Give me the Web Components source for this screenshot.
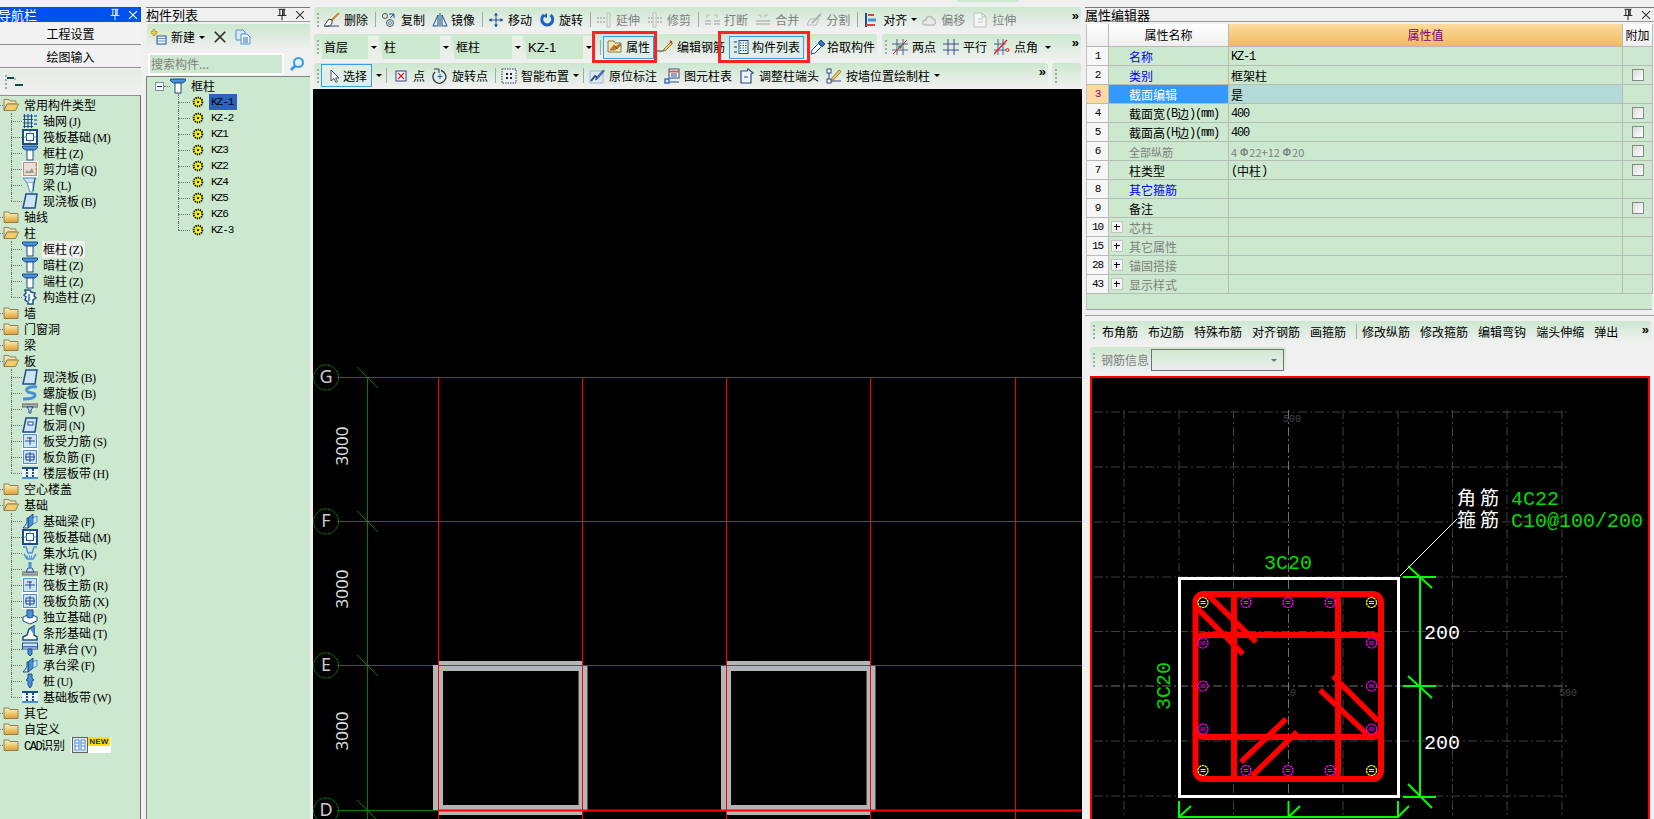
<!DOCTYPE html>
<html lang="zh">
<head>
<meta charset="utf-8">
<title>构件编辑</title>
<style>
  html, body { margin: 0; height: 100%; overflow: hidden; background: #f0f0f0; }
  body { font: 12px/16px "Noto Sans CJK SC", "Liberation Sans", sans-serif; color: #000; }
  #nav { width: 141px; }
  #list { width: 164px; margin-left: 5px; --pr: 3px; }
  #center { width: 769px; margin-left: 3px; }
  #props { width: 569px; margin-left: 3px; }
  .row { display: flex; flex: none; margin-left: 1px; }
  .off { color: #808080; }
</style>
</head>
<body>
<script>
// icon set, all drawn on a 16x16 box
const B = '#1a4f8c', L = '#4a90d8', P = '#cfe2f8';
const ICONS = {
  folderOpen: `<path d="M1 4V2.500h5l1 1.500h6v3H4l-3 6z" fill="#f8e8b0" stroke="#8a8060"/><path d="M4 7h11.500l-3 6.500H1z" fill="#f4cc68" stroke="#8a8060"/>`,
  folder: `<defs><linearGradient id="f" x2="0" y2="1"><stop offset="0" stop-color="#fff4c0"/><stop offset="1" stop-color="#e0a028"/></linearGradient></defs><path d="M1 13.500V3h5l1 1.500h8v9z" fill="url(#f)" stroke="#8a8060"/>`,
  grid: `<path d="M1 3h10M1 6.500h10M1 10h10M1 13.500h10M2.500 1v14M6 1v14M9.500 1v14" stroke="${B}" fill="none"/><path d="M12 3h3M12 7h3M12 11h3" stroke="${L}" stroke-width="2"/>`,
  raft: `<rect x="1" y="1" width="14" height="14" fill="#fff" stroke="${B}" stroke-width="2"/><rect x="4.500" y="4.500" width="7" height="7" fill="none" stroke="${B}"/><path d="M2 8h3M11 8h3M8 2v3M8 11v3" stroke="${L}"/>`,
  col: `<path d="M.5 1h15v2l-3 2h-9l-3-2z" fill="${L}" stroke="${B}"/><rect x="5" y="5" width="6" height="10" fill="#fff" stroke="${B}"/>`,
  shear: `<rect width="16" height="16" fill="#fff"/><rect x="1.500" y="1.500" width="13" height="13" fill="#e8e0d8" stroke="#b09080"/><path d="M3 12l2-3 2 2 3-4 2 5z" fill="#a09890"/><path d="M13 4h2M13 8h2M13 12h2" stroke="#e07020"/>`,
  beam: `<path d="M1 1h13l-3 5H5z" fill="${P}" stroke="${L}"/><path d="M5 6l3 9h3V6" fill="#fff" stroke="${L}"/><path d="M13 1l-2 13" stroke="${B}"/>`,
  slab: `<path d="M4 1h11l-2 14H1z" fill="${P}" stroke="${B}" stroke-width="1.500"/>`,
  spiral: `<path d="M15 2C9 1 3 3 5 6s8 1 8 4-6 4-12 4" fill="none" stroke="${L}" stroke-width="3"/>`,
  cap: `<rect x="0" y="3" width="16" height="3" fill="#b0b0b0" stroke="#606060"/><path d="M5 6h6l-2 3v3H7V9z" fill="${P}" stroke="${B}"/>`,
  hole: `<path d="M4 1h11l-2 14H1z" fill="${P}" stroke="${B}" stroke-width="1.500"/><rect x="6" y="5" width="5" height="3" fill="#fff" stroke="${B}"/>`,
  barS: `<rect width="16" height="16" fill="#fff"/><rect x="1.500" y="1.500" width="13" height="13" fill="${P}" stroke="${L}"/><path d="M3 8h10M8 4v8M5 5h5" stroke="${B}" fill="none"/>`,
  barF: `<rect width="16" height="16" fill="#fff"/><rect x="1.500" y="1.500" width="13" height="13" fill="${P}" stroke="${L}"/><path d="M3 8h10M8 3v10M4 5h8v6H4z" stroke="${B}" fill="none"/>`,
  strip: `<rect y="2" width="16" height="2" fill="${B}"/><rect y="4" width="16" height="9" fill="#eef4fc"/><rect y="12" width="16" height="2" fill="${L}"/><path d="M5 4v9M11 4v9" stroke="${B}" stroke-width="2" stroke-dasharray="2 1"/>`,
  fbeam: `<path d="M6 5l5-4v10l-5 4z" fill="${L}" stroke="${B}"/><path d="M1 15l4-5V5h1v10z" fill="${P}" stroke="${B}"/><path d="M11 11l4-2V3l-4 2z" fill="${P}" stroke="${L}"/>`,
  pit: `<path d="M1 2h3l2 6h4l2-6h3M2 9l3 5h6l3-5" fill="none" stroke="${L}" stroke-width="1.500"/><path d="M5 12h6" stroke="${L}" stroke-dasharray="1 1" stroke-width="3"/>`,
  pier: `<rect y="11" width="16" height="3" fill="#b0b0b0" stroke="#707070"/><path d="M4 11l2-4h4l2 4z" fill="${P}" stroke="${B}"/><rect x="6.500" y="1" width="3" height="6" fill="${L}"/>`,
  iso: `<path d="M1 8l7-3 7 3v4l-7 3-7-3z" fill="#fff" stroke="${B}"/><path d="M5 1h6v7l-3 1-3-1z" fill="${L}" stroke="${B}"/>`,
  sfoot: `<path d="M1 15v-3l4-2 2-6 5-3v9l3 2v3z" fill="#fff" stroke="${B}" stroke-width="1.500"/><path d="M8 4l4-3v9" fill="${L}"/>`,
  pcap: `<rect x="0.500" y="2" width="15" height="4" fill="${P}" stroke="${B}"/><rect x="0.500" y="6" width="15" height="2" fill="#fff" stroke="${B}"/><path d="M6 8h4v5l-2 2-2-2z" fill="${L}" stroke="${B}"/>`,
  pile: `<path d="M6 1h4v4l2 2-2 1v4l-2 3-2-3V8L4 7l2-2z" fill="${L}" stroke="${B}"/>`,
  constr: `<path d="M3 1h5l1 2 4 1-1 3 2 2-3 2v4H6v-2L3 11l1-3-2-2 2-2z" fill="#fff" stroke="${B}" stroke-width="1.500"/><path d="M7 5v7" stroke="${L}" stroke-width="2"/>`,
  cad: `<rect x=".5" y=".5" width="15" height="15" fill="#dbe9fa" stroke="#606060"/><rect x="3" y="3" width="4" height="10" fill="#fff" stroke="${L}"/><rect x="9" y="3" width="4" height="10" fill="#fff" stroke="${L}"/><path d="M3 6h4M3 9h4M9 6h4M9 9h4" stroke="${L}"/>`,
  gear: `<circle cx="8" cy="8" r="5" fill="#ffff00" stroke="#000" stroke-width="2.200" stroke-dasharray="1.500 1"/><circle cx="8" cy="8" r="1.500" fill="#403000"/>`,
  dash: `<path d="M0 4h7" stroke="#085050" stroke-width="2"/><path d="M8 11h8" stroke="#085050" stroke-width="2"/><path d="M7 5h2" stroke="#888"/>`,
  pin: `<path d="M4 1.500h8M5.500 2v6M10.500 2v6M3 8.500h10M8 9v5" stroke="#000" fill="none"/><path d="M9 2v6" stroke="#000" stroke-width="1.500"/>`,
  close: `<path d="M3.500 3.500l9 9M12.500 3.500l-9 9" stroke="#333" stroke-width="1.200"/>`,
  closeW: `<path d="M3.500 3.500l9 9M12.500 3.500l-9 9" stroke="#fff" stroke-width="1.200"/>`,
  pinW: `<path d="M4 1.500h8M5.500 2v6M10.500 2v6M3 8.500h10M8 9v5" stroke="#fff" fill="none"/><path d="M9 2v6" stroke="#fff" stroke-width="1.500"/>`,
  newc: `<path d="M2 .5h2v2h2v2H4v2H2v-2H0v-2h2z" fill="#f4d840" stroke="#a08000" stroke-width=".6"/><rect x="6" y="7" width="9" height="8" fill="#fff" stroke="${B}"/><path d="M6 9.500h9M6 12h9" stroke="${L}"/>`,
  cross: `<path d="M2 2l12 12M14 2L2 14" stroke="#303030" stroke-width="2"/>`,
  docs: `<path d="M1 1h7l2 2v8H1z" fill="#dbe9fa" stroke="${L}"/><path d="M6 5h6l3 3v7H6z" fill="#eef4fc" stroke="${L}"/><path d="M8 9h5M8 11h5M8 13h5" stroke="${B}" stroke-width=".8"/>`,
  search: `<circle cx="9.500" cy="6.500" r="4.500" fill="#dff0ff" stroke="#3a9ae0" stroke-width="2"/><path d="M6 10l-4 4" stroke="#3a9ae0" stroke-width="3"/>`,
  erase: `<path d="M15 1L7 9" stroke="#d08020" stroke-width="2"/><path d="M8 8l-3-1-3 4-2 3c4 1 7 0 8-3z" fill="#fff" stroke="#404040"/><path d="M1 14h14" stroke="#404060"/>`,
  dup: `<circle cx="4" cy="4" r="2.500" fill="none" stroke="#505050"/><circle cx="9" cy="11" r="3.500" fill="none" stroke="#505050"/><circle cx="9" cy="11" r="1.500" fill="none" stroke="${L}"/><path d="M8 2l5 0 0 4M13 2L9 6" stroke="${B}" fill="none"/>`,
  mirror: `<path d="M6 3v11H1zM10 3v11h5z" fill="none" stroke="${B}"/><path d="M8 1v14" stroke="${B}"/>`,
  move: `<path d="M8 1v14M1 8h14" stroke="${B}"/><path d="M8 1L6 3.500h4zM8 15l-2-2.500h4zM1 8l2.500-2v4zM15 8l-2.500-2v4z" fill="${B}"/>`,
  rotate: `<path d="M5 3a5.500 5.500 0 1 0 6.500 0" fill="none" stroke="#2060c0" stroke-width="3"/><path d="M8 1v5l-4-2z" fill="#2060c0"/>`,
  extend: `<path d="M1 6h8M1 10h8" stroke="#a8a8a8" stroke-dasharray="2 1" stroke-width="1.500"/><path d="M11 1h3v14h-3z" fill="none" stroke="#b8b8b8"/>`,
  trim: `<path d="M1 6h14M1 10h14" stroke="#a8a8a8" stroke-dasharray="2 1" stroke-width="1.500"/><path d="M6 1h3v14H6z" fill="#f0f0f0" stroke="#b8b8b8"/>`,
  brk: `<path d="M1 9h6M10 9h6M1 12h6M10 12h6" stroke="#b0b0b0" stroke-width="1.500"/><path d="M3 6V3h3M13 6V3h-3" stroke="#b0b0b0" fill="none"/>`,
  merge: `<path d="M1 9h14M1 12h14" stroke="#b0b0b0" stroke-width="1.500"/><path d="M3 3h3v3M13 3h-3v3" stroke="#b0b0b0" fill="none"/>`,
  split: `<path d="M1 13l3-6h9l-3 6z" fill="none" stroke="#b0b0b0"/><path d="M6 11L15 2" stroke="#a8a8a8" stroke-width="2"/>`,
  alignl: `<path d="M3 1v14" stroke="${B}" stroke-width="2"/><path d="M5 3h6" stroke="#e04040" stroke-width="2"/><path d="M5 8h8" stroke="${L}" stroke-width="3"/><path d="M3 13h9" stroke="#e04040" stroke-width="2"/>`,
  offs: `<path d="M3 13c-3-2 0-6 2-5 0-4 6-5 7-1 3 0 3 5 1 6z" fill="#e8e8e8" stroke="#b8b8b8" stroke-width="1.500"/>`,
  stretch: `<path d="M2 1h8l4 4v10H2z" fill="#f8f8f8" stroke="#b8b8b8"/><path d="M6 7h5M6 10h5M10 1v4h4" stroke="#b8b8b8" fill="none"/>`,
  propsi: `<path d="M1 4V2h6l1 2h6v9H1z" fill="#f8e8b0" stroke="#8a7a50"/><path d="M3 11l4-5 3 3-2 2zM8 8l5-3 1 1-4 4z" fill="#d88030" stroke="#704010" stroke-width=".6"/>`,
  editbar: `<path d="M0 12h6l3-2" stroke="#303030" fill="none"/><path d="M7 10l7-7 1.500 1.500-7 7-2 .5z" fill="#f4d060" stroke="#806020" stroke-width=".8"/><path d="M13 2l2 2" stroke="#d03030" stroke-width="2"/>`,
  listi: `<path d="M1 2h3v2H1zM1 7h3v2H1zM1 12h3v2H1z" fill="#7090b0"/><rect x="6" y="1.500" width="9" height="13" fill="#fff" stroke="${B}"/><path d="M7 4h7M7 6.500h7M7 9h7M7 11.500h7" stroke="${B}" stroke-dasharray="1.500 1"/>`,
  pick: `<path d="M1 15l1-4 7-7 3 3-7 7z" fill="#fff" stroke="${B}"/><path d="M9 3l2-2 4 4-2 2-1 1-4-4z" fill="#3070c0" stroke="${B}"/>`,
  twop: `<path d="M0 5h16M0 11h16M5 0v16M11 0v16" stroke="#304080" stroke-width=".8"/><path d="M1 15L15 1" stroke="#e02020"/><circle cx="8" cy="8" r="1.800" fill="#408030"/>`,
  para: `<path d="M0 5h16M0 11h16M5 0v16M11 0v16" stroke="#304080" stroke-width=".9"/>`,
  pang: `<path d="M0 5h12M0 11h12M4 0v16M9 0v16" stroke="#304080" stroke-width=".8"/><path d="M0 15L13 1" stroke="#e02020" stroke-width="1.300"/><circle cx="13.500" cy="11" r="1.500" fill="none" stroke="#d02020"/>`,
  cursor: `<path d="M5 2v11l3-2.500 2 4 1.500-1-2-3.500h3.500z" fill="#fff" stroke="#505060"/>`,
  point: `<rect x="3" y="3" width="10" height="10" fill="#f4f8ff" stroke="#304080"/><path d="M5 5l6 6M11 5l-6 6" stroke="#d02020" stroke-width="1.300"/>`,
  rotp: `<path d="M3 4a6.500 6.500 0 1 0 6-1.500" fill="none" stroke="#303848" stroke-width="1.300"/><path d="M2 1h5v4" fill="none" stroke="#303848"/><path d="M8 6v5M5.500 8.500h5" stroke="#2060c0"/>`,
  smart: `<rect x="1" y="1" width="14" height="14" fill="#e8eef4" stroke="#404040" stroke-dasharray="1.500 1"/><path d="M5 5h2v2H5zM9 5h2v2H9zM5 9h2v2H5zM9 9h2v2H9z" fill="#202020"/>`,
  inplace: `<path d="M1 3h13v12H1z" fill="#dbe9fa" stroke="#a0b8d8"/><path d="M2 13l4-5 3 2" fill="none" stroke="#304880" stroke-width="2"/><path d="M7 10l7-8 1.500 1-7 8-2 1z" fill="#4a78c0" stroke="#204070" stroke-width=".6"/>`,
  table: `<rect x="5" y="1" width="10" height="9" fill="#fff" stroke="#304880"/><path d="M5 3.500h10" stroke="#d06040" stroke-width="2"/><path d="M7 6h6M7 8h6" stroke="#304880"/><rect x="1" y="11" width="4" height="4" fill="none" stroke="#2060c0" stroke-width="1.300"/><path d="M6 14h9" stroke="#304880"/>`,
  adjust: `<path d="M2 3h6l1-2 5 4-2 1v9H2z" fill="#eef4fc" stroke="#304880" stroke-width="1.200"/><path d="M5 9h4" stroke="#304880"/>`,
  wallpos: `<rect x="1" y="1" width="4" height="4" fill="#fff" stroke="#304880"/><rect x="1" y="11" width="4" height="4" fill="#fff" stroke="#304880"/><path d="M3 5v6M5 13h10" stroke="#304880"/><path d="M6 10l7-8 2 1.500-7 8-3 1z" fill="#f0c860" stroke="#806020" stroke-width=".7"/>`
};

const NAV_ROWS = [
  [0,'folderOpen','常用构件类型'],[1,'grid','轴网','(J)'],[1,'raft','筏板基础','(M)'],[1,'col','框柱','(Z)'],[1,'shear','剪力墙','(Q)'],[1,'beam','梁','(L)'],[1,'slab','现浇板','(B)'],
  [0,'folder','轴线'],
  [0,'folderOpen','柱'],[1,'col','框柱','(Z)','hover'],[1,'col','暗柱','(Z)'],[1,'col','端柱','(Z)'],[1,'constr','构造柱','(Z)'],
  [0,'folder','墙'],[0,'folder','门窗洞'],[0,'folder','梁'],
  [0,'folderOpen','板'],[1,'slab','现浇板','(B)'],[1,'spiral','螺旋板','(B)'],[1,'cap','柱帽','(V)'],[1,'hole','板洞','(N)'],[1,'barS','板受力筋','(S)'],[1,'barF','板负筋','(F)'],[1,'strip','楼层板带','(H)'],
  [0,'folder','空心楼盖'],
  [0,'folderOpen','基础'],[1,'fbeam','基础梁','(F)'],[1,'raft','筏板基础','(M)'],[1,'pit','集水坑','(K)'],[1,'pier','柱墩','(Y)'],[1,'barS','筏板主筋','(R)'],[1,'barF','筏板负筋','(X)'],[1,'iso','独立基础','(P)'],[1,'sfoot','条形基础','(T)'],[1,'pcap','桩承台','(V)'],[1,'fbeam','承台梁','(F)'],[1,'pile','桩','(U)'],[1,'strip','基础板带','(W)'],
  [0,'folder','其它'],[0,'folder','自定义'],[0,'folder','CAD识别',null,'new']
];

// wraps runs of latin text so they get the narrow look of the original
const latin = s => s.replace(/[\x21-\x7e]+/g, m => `<span class="l">${m}</span>`);

class UiIcon extends HTMLElement {
  connectedCallback() {
    const s = this.getAttribute('size') || 16;
    this.attachShadow({ mode: 'open' }).innerHTML = `
      <style>:host { display: block; flex: none; width: ${s}px; height: ${s}px; } svg { display: block; }</style>
      <svg width="${s}" height="${s}" viewBox="0 0 16 16">${ICONS[this.getAttribute('name')] || ''}</svg>`;
  }
}
customElements.define('ui-icon', UiIcon);

class GclWorkbench extends HTMLElement {
  connectedCallback() {
    this.attachShadow({ mode: 'open' }).innerHTML = `
      <style>
        :host { display: flex; flex-direction: column; height: 819px; overflow: hidden; }
        .top { flex: none; height: 7px; display: flex; }
        .top i { display: block; width: 62px; height: 2px; margin-left: 957px; background: #cce8cf; }
        .main { flex: 1; min-height: 0; display: flex; }
      </style>
      <div class="top"><i></i></div>
      <div class="main"><slot></slot></div>`;
  }
}
customElements.define('gcl-workbench', GclWorkbench);

class DockPanel extends HTMLElement {
  connectedCallback() {
    const on = this.hasAttribute('active');
    this.attachShadow({ mode: 'open' }).innerHTML = `
      <style>
        :host { display: flex; flex-direction: column; flex: none; min-width: 0; height: 812px; overflow: hidden; }
        .bar { flex: none; height: 15px; display: flex; align-items: center; box-sizing: border-box; font-size: 13px; line-height: 13px;
               background: #f0f0f0; border-top: 1px solid #777; border-bottom: 1px solid #999; }
        :host([active]) .bar { background: #0050ee; color: #fff; border: 0; }
        .name { flex: 1; white-space: nowrap; }
        :host([active]) .name { margin-left: -2px; }
        .tools { display: flex; gap: 4px; padding-right: var(--pr, 1px); }
        .body { height: 797px; display: flex; flex-direction: column; padding-top: 1px; box-sizing: border-box; }
      </style>
      <div class="bar"><span class="name">${this.getAttribute('heading')}</span>
        <span class="tools"><ui-icon name="${on ? 'pinW' : 'pin'}" size="14"></ui-icon><ui-icon name="${on ? 'closeW' : 'close'}" size="14"></ui-icon></span></div>
      <div class="body"><slot></slot></div>`;
  }
}
customElements.define('dock-panel', DockPanel);

class SideButton extends HTMLElement {
  connectedCallback() {
    this.attachShadow({ mode: 'open' }).innerHTML = `
      <style>
        :host { display: flex; flex: none; height: 22px; margin-bottom: 1px; align-items: center; justify-content: center;
                box-sizing: border-box; background: #f2f2f2; border-bottom: 1px solid #909090; font-size: 12px; }
      </style><slot></slot>`;
  }
}
customElements.define('side-button', SideButton);

const STRIP = 'linear-gradient(#cce8cf, #f0f0f0)';

class TreeView extends HTMLElement {
  connectedCallback() {
    const html = NAV_ROWS.map((r, i) => {
      const [depth, icon, text, hot, extra] = r;
      const last = depth === 1 && (!NAV_ROWS[i + 1] || NAV_ROWS[i + 1][0] === 0);
      return `<div class="r d${depth} ${last ? 'last' : ''}">
        <ui-icon name="${icon}"></ui-icon>
        <span class="t ${extra === 'hover' ? 'hov' : ''}">${latin(text)}${hot ? `<span class="h">${hot}</span>` : ''}</span>
        ${extra === 'new' ? '<span class="nw"><ui-icon name="cad"></ui-icon><b>NEW</b></span>' : ''}
      </div>`;
    }).join('');
    this.attachShadow({ mode: 'open' }).innerHTML = `
      <style>
        :host { display: block; flex: 1; min-height: 0; background: #cce8cf; border-top: 1px solid #909090; border-right: 1px solid #707070; padding-top: 1px; overflow: hidden; }
        .r { position: relative; display: flex; align-items: center; height: 16px; white-space: nowrap; }
        .d0 { padding-left: 3px; } .d0 .t { margin-left: 5px; }
        .d1 { padding-left: 22px; } .d1 .t { margin-left: 5px; padding: 0 1px 0 0; }
        .r::after { content: ""; position: absolute; top: 8px; border-top: 1px dotted #707070; }
        .d0::after { left: 0; width: 3px; }
        .d1::after { left: 11px; width: 11px; }
        .d1::before { content: ""; position: absolute; left: 11px; top: 0; bottom: 0; border-left: 1px dotted #707070; }
        .last::before { bottom: 8px; }
        .l { font: 12px "Liberation Mono", monospace; letter-spacing: -1.500px; }
        .h { font: 12px "Liberation Serif", serif; margin-left: 2px; letter-spacing: -.5px; }
        .hov { background: #f0f2ef; margin-left: 4px !important; padding: 0 2px 0 1px !important; }
        .nw { display: flex; background: #fff; margin-left: 6px; height: 16px; width: 40px; box-sizing: border-box; padding-left: 1px; }
        .nw b { height: 9px; font: bold 8px/9px "Liberation Sans", sans-serif; background: #ffe000; padding: 0 1px; color: #203060; letter-spacing: .3px; }
      </style>${html}`;
  }
}
customElements.define('tree-view', TreeView);

class MemberTree extends HTMLElement {
  connectedCallback() {
    const items = this.getAttribute('items').split(',');
    this.attachShadow({ mode: 'open' }).innerHTML = `
      <style>
        :host { display: block; flex: 1; min-height: 0; background: #cce8cf; border: 1px solid #808080; border-width: 1px 0 0 1px; padding-top: 1px; }
        .r { position: relative; display: flex; align-items: center; height: 16px; }
        .box { margin-left: 8px; width: 9px; height: 9px; box-sizing: border-box; border: 1px solid #8090a8; background: #f4f6fa; position: relative; }
        .box::after { content: ""; position: absolute; left: 1px; right: 1px; top: 3px; border-top: 1px solid #203080; }
        .hz { width: 6px; border-top: 1px dotted #707070; }
        .root ui-icon { margin-right: 5px; }
        .kid { padding-left: 44px; }
        .kid::before { content: ""; position: absolute; left: 31px; top: 0; bottom: 0; border-left: 1px dotted #707070; }
        .kid:last-child::before { bottom: 8px; }
        .kid::after { content: ""; position: absolute; left: 31px; width: 12px; top: 8px; border-top: 1px dotted #707070; }
        .kid span { margin-left: 4px; padding: 0 2px; height: 16px; font: 11px/17px "Liberation Mono", monospace; letter-spacing: -1px; }
        .sel { background: #2d62bc; padding-right: 4px !important; }
      </style>
      <div class="r root"><i class="box"></i><i class="hz"></i><ui-icon name="col"></ui-icon>框柱</div>
      ${items.map((k, i) => `<div class="r kid"><ui-icon name="gear" size="14"></ui-icon><span class="${i ? '' : 'sel'}">${k}</span></div>`).join('')}`;
  }
}
customElements.define('member-tree', MemberTree);

class ToolStrip extends HTMLElement {
  connectedCallback() {
    this.attachShadow({ mode: 'open' }).innerHTML = `
      <style>
        :host { display: flex; align-items: center; gap: var(--gap, 7px); flex: none; box-sizing: border-box; padding-left: 3px; white-space: nowrap;
                background: ${STRIP}; border-radius: 3px 3px 0 0; position: relative; }
        .grip { width: 2px; height: 14px; margin-right: -2px; flex: none; background: repeating-linear-gradient(#a0a8a0 0 2px, transparent 2px 4px); }
        .more { position: absolute; right: 2px; top: 2px; font: bold 13px/13px "Liberation Sans", sans-serif; }
      </style>
      <i class="grip"></i><slot></slot><span class="more">${this.hasAttribute('nomore') ? '' : '»'}</span>`;
  }
}
customElements.define('tool-strip', ToolStrip);

class ToolBtn extends HTMLElement {
  connectedCallback() {
    const icon = this.getAttribute('icon');
    const off = this.hasAttribute('off');
    this.attachShadow({ mode: 'open' }).innerHTML = `
      <style>
        :host { display: flex; flex: none; align-items: center; gap: var(--g, 4px); position: relative; }
        :host([off]) { color: #808080; }
        :host([boxed]) { height: 23px; box-sizing: border-box; padding: 0 var(--p, 3px); border: 1px solid #3a9cf0; background: #dfeee6; }
        :host([marked])::after { content: ""; position: absolute; top: -6px; bottom: -5px; left: -12px; right: var(--mr, -4px); border: 3px solid #f22; pointer-events: none; }
      </style>${icon ? `<ui-icon name="${icon}" style="${off ? 'opacity:.85' : ''}"></ui-icon>` : ''}<slot></slot>`;
  }
}
customElements.define('tool-btn', ToolBtn);

class ToolSep extends HTMLElement {
  connectedCallback() {
    this.attachShadow({ mode: 'open' }).innerHTML = `<style>:host { display: block; flex: none; width: 1px; height: 15px; margin-right: -2px; background: #a0aca0; }</style>`;
  }
}
customElements.define('tool-sep', ToolSep);

class ToolCaret extends HTMLElement {
  connectedCallback() {
    this.attachShadow({ mode: 'open' }).innerHTML = `<style>:host { display: block; flex: none; width: 0; height: 0; margin: 0 -3px; border: 3px solid transparent; border-top: 3px solid #000; border-bottom: 0; }</style>`;
  }
}
customElements.define('tool-caret', ToolCaret);

class ToolCombo extends HTMLElement {
  connectedCallback() {
    this.attachShadow({ mode: 'open' }).innerHTML = `
      <style>
        :host { display: flex; flex: none; align-items: center; height: 23px; background: #cce8cf; padding-left: 2px; box-sizing: border-box; position: relative; }
        .a { margin-left: auto; width: 11px; height: 100%; background: #e8f0e8; display: flex; align-items: center; justify-content: center; }
        .a::after { content: ""; border: 3px solid transparent; border-top: 3px solid #000; border-bottom: 0; }
      </style><slot></slot><span class="a"></span>`;
  }
}
customElements.define('tool-combo', ToolCombo);

class PropTable extends HTMLElement {
  connectedCallback() {
    const rows = [
      ['1', '名称', 'KZ-1', 'b', 0], ['2', '类别', '框架柱', 'b', 1], ['3', '截面编辑', '是', 's', 0],
      ['4', '截面宽(B边)(mm)', '400', '', 1], ['5', '截面高(H边)(mm)', '400', '', 1],
      ['6', '全部纵筋', '4Φ22+12Φ20', 'g', 1], ['7', '柱类型', '(中柱)', '', 1], ['8', '其它箍筋', '', 'b', 0],
      ['9', '备注', '', '', 1], ['10', '芯柱', '', 'x', 0], ['15', '其它属性', '', 'x', 0],
      ['28', '锚固搭接', '', 'x', 0], ['43', '显示样式', '', 'x', 0]
    ];
    const cells = rows.map(([n, name, val, kind, chk]) => `
      <div class="c num ${kind === 's' ? 'sn' : ''}">${n}</div>
      <div class="c name ${kind} ${kind === 's' ? 'sel' : ''}">${kind === 'x' ? '<i class="plus"></i>' : ''}${latin(name)}</div>
      <div class="c val ${kind === 'g' ? 'g' : ''} ${kind === 's' ? 'sv' : ''}">${kind === 'g' ? val.replace(/Φ/g, '<b>Φ</b>') : latin(val)}</div>
      <div class="c add">${chk ? '<i class="chk"></i>' : ''}</div>`).join('');
    this.attachShadow({ mode: 'open' }).innerHTML = `
      <style>
        :host { display: block; flex: none; margin: 1px 2px 0 1px; height: 286px; background: #cce8cf; border-left: 1px solid #c0c0c0; border-bottom: 1px solid #a0a0a8; box-sizing: border-box; }
        .g-t { display: grid; grid-template-columns: 22px 120px 394px 30px; grid-auto-rows: 19px; grid-template-rows: 23px; }
        .c { box-sizing: border-box; border-right: 1px solid #b4bcb4; border-bottom: 1px solid #b4bcb4; display: flex; align-items: center; white-space: nowrap; overflow: hidden; padding-top: 2px; }
        .hd { justify-content: center; background: linear-gradient(#fff, #eee); border-color: #b8b8b8; padding-top: 0; }
        .hv { background: linear-gradient(#fbdc9e, #f2b95e); color: #800080; }
        .num { justify-content: center; background: #f6f6f6; font: 11px "Liberation Mono", monospace; letter-spacing: -1px; padding-top: 0; }
        .sn { background: #ffd9a0; color: #800080; }
        .name { padding-left: 20px; position: relative; }
        .b { color: #0000ff; } .g { color: #808080; } .x { color: #808080; }
        .sel { background: #3399ff; color: #fff; }
        .val { padding-left: 2px; } .sv { background: #b2dbd8; }
        .val b { font: bold 10px "Liberation Sans", sans-serif; margin: 0 1px 0 3px; }
        .g { font-size: 11px; }
        .add { justify-content: center; padding-top: 0; }
        .chk { width: 12px; height: 12px; box-sizing: border-box; border: 1px solid #888; background: linear-gradient(135deg, #d8dcd8, #fff); }
        .plus { position: absolute; left: 2px; top: 3px; width: 12px; height: 12px; box-sizing: border-box; background: #f4f4f4; border: 1px solid #c4c4c4; }
        .plus::before { content: ""; position: absolute; left: 2px; right: 2px; top: 4px; border-top: 1px solid #000; }
        .plus::after { content: ""; position: absolute; top: 2px; bottom: 2px; left: 4px; border-left: 1px solid #000; }
        .l { font: 12px "Liberation Mono", monospace; letter-spacing: -1.200px; }
      </style>
      <div class="g-t">
        <div class="c hd"></div><div class="c hd">属性名称</div><div class="c hd hv">属性值</div><div class="c hd">附加</div>
        ${cells}
      </div>`;
  }
}
customElements.define('prop-table', PropTable);

class PlanCanvas extends HTMLElement {
  connectedCallback() {
    const ys = { G: 377, F: 521, E: 665, D: 810 };
    const xs = [438, 582.5, 726, 870.5, 1015];
    let s = `<path d="M367.500 377V819" stroke="#008000"/>`;
    for (const [k, y] of Object.entries(ys)) {
      const yy = y + .5;
      s += `<circle cx="326" cy="${yy}" r="12.500" fill="none" stroke="#008000" stroke-dasharray="4 .6"/>
        <path d="M338 ${yy}H438M357 ${y - 10}L378 ${y + 11}" stroke="#008000" fill="none"/>
        <text x="326" y="${y + 6}" text-anchor="middle" class="ax">${k}</text>`;
    }
    const col = (x0, x1) => `<path fill="#b4b4b4" fill-rule="evenodd" d="M${x0 - 5} 665H${x0}V661H${x1}V665H${x1 + 5}V810H${x1}V815H${x0}V810H${x0 - 5}Z M${x0 + 5} 671V805H${x1 - 4}V671Z"/>`;
    s += col(438, 582.5) + col(726, 870.5);
    s += `<path d="M438 377.500H1082M438 521.500H1082M438 665.500H1082" stroke="#f00"/><path d="M438 810.500H1082" stroke="#f00" stroke-width="2"/>`;
    xs.forEach(x => { s += `<path d="M${Math.floor(x) + .5} 377V819" stroke="#f00"/>`; });
    [446, 589, 731].forEach(y => { s += `<text transform="translate(348 ${y}) rotate(-90)" text-anchor="middle" class="dm">3000</text>`; });
    this.attachShadow({ mode: 'open' }).innerHTML = `
      <style>
        :host { display: block; flex: 1; min-height: 0; background: #000; }
        svg { display: block; }
        .ax { font: 18px "Noto Sans", sans-serif; fill: #ccc; }
        .dm { font: 17px "Noto Sans", sans-serif; fill: #ddd; }
      </style>
      <svg width="769" height="730" viewBox="313 89 769 730">${s}</svg>`;
  }
}
customElements.define('plan-canvas', PlanCanvas);

class RebarCanvas extends HTMLElement {
  connectedCallback() {
    let s = '';
    // dashed reference grid
    [1124, 1179, 1233.5, 1343, 1398, 1452.5, 1507, 1562].forEach(x => { s += `<path d="M${x} 411V819" class="gr"/>`; });
    [413, 468, 523, 578, 632.5, 742, 797].forEach(y => { s += `<path d="M1094 ${y}H1570" class="gr"/>`; });
    s += `<path d="M1288.500 411V819M1094 687H1570" class="gr" style="stroke:#707070"/>`;
    s += `<text x="1292" y="423" class="tk" text-anchor="middle">500</text><text x="1293" y="697" class="tk" text-anchor="middle">0</text><text x="1568" y="697" class="tk" text-anchor="middle">500</text>`;
    // section outline and stirrups
    s += `<rect x="1179.500" y="579.500" width="219" height="218" fill="none" stroke="#fff" stroke-width="3"/>`;
    s += `<g fill="none" stroke="#f00" stroke-width="6">
      <rect x="1195.500" y="595" width="185.500" height="185" rx="8"/>
      <path d="M1237 780c-3 0-3-2-3-6V601c0-4 0-6 3-6M1330 595c8 0 8 3 8 8V772c0 5 0 8-8 8"/>
      <path d="M1198 642c0-4 2-6 6-6H1373c4 0 6 2 6 6M1198 732c0 4 2 6 6 6H1373c4 0 6-2 6-6"/>
    </g>
    <g stroke="#f00" stroke-width="5.500" fill="none">
      <path d="M1208.700 596.700L1256 643M1196 608L1243 655M1333 677L1378 722M1320 691L1367 735M1286 720L1241 763M1297 733L1252 777"/>
    </g>`;
    // bars
    const bar = (x, y, c) => `<circle cx="${x}" cy="${y}" r="5" fill="#000" stroke="${c}" stroke-width="1.200" stroke-dasharray="2.500 .6"/><path d="M${x - 2.5} ${y - 1}h5M${x - 2.5} ${y + 1}h5" stroke="${c}"/>`;
    [[1203, 603.5], [1371.5, 603.5], [1203, 771.5], [1371.5, 771.5]].forEach(([x, y]) => { s += bar(x, y, '#ff0'); });
    [1246, 1288, 1330].forEach(x => { s += bar(x, 603.5, '#f0f') + bar(x, 771.5, '#f0f'); });
    [644, 687, 730].forEach(y => { s += bar(1203, y, '#f0f') + bar(1371.5, y, '#f0f'); });
    // dimensions
    s += `<g stroke="#0f0" stroke-width="2" fill="none">
      <path d="M1420 578V798M1403 578H1436M1403 687H1436M1403 798H1436M1408 567L1432 589M1408 677L1432 699M1408 785L1432 809"/>
      <path d="M1178 818H1398M1179 802V819M1288.500 802V819M1398 802V819M1179 818L1191 807M1288.500 818L1300 807M1398 818L1409 807"/>
    </g>
    <path d="M1400 577L1457 520" stroke="#fff"/>`;
    s += `<text x="1288" y="570" text-anchor="middle" class="gn">3C20</text>
      <text transform="translate(1170 687) rotate(-90)" text-anchor="middle" class="gn">3C20</text>
      <text x="1424" y="640" class="wt">200</text><text x="1424" y="750" class="wt">200</text>
      <text x="1457" y="506" class="cn">角筋</text><text x="1457" y="528" class="cn">箍筋</text>
      <text x="1511" y="506" class="gn">4C22</text><text x="1511" y="528" class="gn">C10@100/200</text>`;
    this.attachShadow({ mode: 'open' }).innerHTML = `
      <style>
        :host { display: block; flex: 1; min-height: 0; margin: 3px 4px 0 5px; background: #000; border: 2px solid #f00; border-bottom: 0; overflow: hidden; }
        svg { display: block; }
        .gr { stroke: #404040; stroke-dasharray: 9 3 2 3; fill: none; }
        .tk { font: 10px "Liberation Mono", monospace; fill: #444; }
        .gn { font: 20px "Liberation Mono", monospace; fill: #0d0; }
        .wt { font: 20px "Liberation Mono", monospace; fill: #fff; }
        .cn { font: 19px "Noto Sans CJK SC", sans-serif; fill: #fff; letter-spacing: 4px; }
      </style>
      <svg width="556" height="440" viewBox="1092 379 556 440">${s}</svg>`;
  }
}
customElements.define('rebar-canvas', RebarCanvas);

class ListTools extends HTMLElement {
  connectedCallback() {
    this.attachShadow({ mode: 'open' }).innerHTML = `
      <style>
        :host { display: block; flex: none; margin-left: 1px; }
        .bar { height: 26px; margin-top: 1px; display: flex; align-items: center; padding-left: 4px; background: ${STRIP}; }
        .cr { width: 0; border: 3px solid transparent; border-top: 3px solid #000; border-bottom: 0; margin: 0 8px 0 4px; }
        .find { display: flex; align-items: center; height: 26px; padding-top: 1px; box-sizing: border-box; background: #f0f0f0; }
        .box { width: 136px; height: 22px; margin-left: 1px; box-sizing: border-box; border: 2px solid #fff; background: #cce8cf; color: #808080; line-height: 18px; padding-left: 1px; }
        .find ui-icon { margin-left: 5px; }
      </style>
      <div class="bar"><ui-icon name="newc"></ui-icon><span style="margin-left:4px">新建</span><i class="cr"></i>
        <ui-icon name="cross" size="14"></ui-icon><ui-icon name="docs" style="margin-left:8px"></ui-icon></div>
      <div class="find"><div class="box">搜索构件...</div><ui-icon name="search"></ui-icon></div>`;
  }
}
customElements.define('list-tools', ListTools);
</script>

<gcl-workbench>
  <dock-panel id="nav" heading="导航栏" active>
    <side-button>工程设置</side-button>
    <side-button>绘图输入</side-button>
    <tool-strip nomore style="height:26px;background:linear-gradient(#e4ece4,#f0f0f0);--gap:2px;padding-left:5px"><ui-icon name="dash"></ui-icon></tool-strip>
    <tree-view></tree-view>
  </dock-panel>

  <dock-panel id="list" heading="构件列表">
    <list-tools></list-tools>
    <member-tree items="KZ-1,KZ-2,KZ1,KZ3,KZ2,KZ4,KZ5,KZ6,KZ-3"></member-tree>
  </dock-panel>

  <div id="center" style="display:flex;flex-direction:column;flex:none;height:812px">
    <div class="row" style="height:22px">
      <tool-strip style="width:767px;padding-top:3px">
        <tool-btn icon="erase">删除</tool-btn><tool-sep></tool-sep>
        <tool-btn icon="dup">复制</tool-btn><tool-btn icon="mirror" style="--g:3px">镜像</tool-btn><tool-sep></tool-sep>
        <tool-btn icon="move">移动</tool-btn><tool-btn icon="rotate">旋转</tool-btn><tool-sep></tool-sep>
        <tool-btn icon="extend" off>延伸</tool-btn><tool-btn icon="trim" off>修剪</tool-btn><tool-sep></tool-sep>
        <tool-btn icon="brk" off>打断</tool-btn><tool-btn icon="merge" off>合并</tool-btn><tool-btn icon="split" off>分割</tool-btn><tool-sep></tool-sep>
        <tool-btn icon="alignl">对齐</tool-btn><tool-caret></tool-caret>
        <tool-btn icon="offs" off>偏移</tool-btn><tool-btn icon="stretch" off>拉伸</tool-btn>
      </tool-strip>
    </div>
    <div class="row" style="height:26px;margin-top:5px">
      <tool-strip nomore style="width:563px;--gap:3px">
        <tool-combo style="width:57px;margin-left:2px">首层</tool-combo>
        <tool-combo style="width:69px">柱</tool-combo>
        <tool-combo style="width:69px">框柱</tool-combo>
        <tool-combo style="width:68px;font:13px 'Liberation Sans',sans-serif">KZ-1</tool-combo>
        <tool-sep style="margin-left:3px;margin-right:-1px"></tool-sep>
        <tool-btn icon="propsi" boxed marked style="--g:3px;--mr:-4px">属性</tool-btn>
        <tool-btn icon="editbar">编辑钢筋</tool-btn>
        <tool-btn icon="listi" boxed marked style="--g:3px;--mr:-7px;margin-left:1px">构件列表</tool-btn>
        <tool-btn icon="pick" style="--g:1px;margin-left:3px">拾取构件</tool-btn>
      </tool-strip>
      <tool-strip style="width:199px;margin-left:5px">
        <tool-btn icon="twop">两点</tool-btn><tool-btn icon="para">平行</tool-btn><tool-btn icon="pang">点角</tool-btn><tool-caret style="margin:0"></tool-caret>
      </tool-strip>
    </div>
    <div class="row" style="height:25px;margin-top:3px">
      <tool-strip style="width:734px">
        <tool-btn icon="cursor" boxed style="--g:1px;--p:4px;margin-left:-3px">选择</tool-btn><tool-caret></tool-caret><tool-sep></tool-sep>
        <tool-btn icon="point" style="margin-left:1px">点</tool-btn><tool-btn icon="rotp">旋转点</tool-btn><tool-sep></tool-sep>
        <tool-btn icon="smart">智能布置</tool-btn><tool-caret></tool-caret><tool-sep></tool-sep>
        <tool-btn icon="inplace">原位标注</tool-btn><tool-btn icon="table">图元柱表</tool-btn><tool-btn icon="adjust">调整柱端头</tool-btn>
        <tool-btn icon="wallpos">按墙位置绘制柱</tool-btn><tool-caret></tool-caret>
      </tool-strip>
      <tool-strip nomore style="width:29px;margin-left:4px"></tool-strip>
    </div>
    <plan-canvas style="margin-top:1px"></plan-canvas>
  </div>

  <dock-panel id="props" heading="属性编辑器">
    <prop-table></prop-table>
    <div style="flex:1;min-height:0;display:flex;flex-direction:column;margin-top:5px;border-top:1px solid #a0a0a8">
      <tool-strip style="width:561px;height:21px;margin:5px 0 0 5px;--gap:10px">
        <span style="margin-left:-1px">布角筋</span><span>布边筋</span><span>特殊布筋</span><span>对齐钢筋</span><span>画箍筋</span>
        <tool-sep style="margin-right:-5px"></tool-sep>
        <span>修改纵筋</span><span>修改箍筋</span><span>编辑弯钩</span><span>端头伸缩</span><span>弹出</span>
      </tool-strip>
      <tool-strip nomore style="width:196px;height:26px;margin:5px 0 0 5px;--gap:2px;padding-left:3px">
        <span class="off" style="margin-left:6px;color:#808080">钢筋信息</span>
        <span style="display:flex;align-items:center;justify-content:flex-end;width:133px;height:22px;box-sizing:border-box;border:1px solid #707070;padding-right:6px"><i style="border:3px solid transparent;border-top-color:#707070;border-bottom:0"></i></span>
      </tool-strip>
      <rebar-canvas></rebar-canvas>
    </div>
  </dock-panel>
</gcl-workbench>
</body>
</html>
